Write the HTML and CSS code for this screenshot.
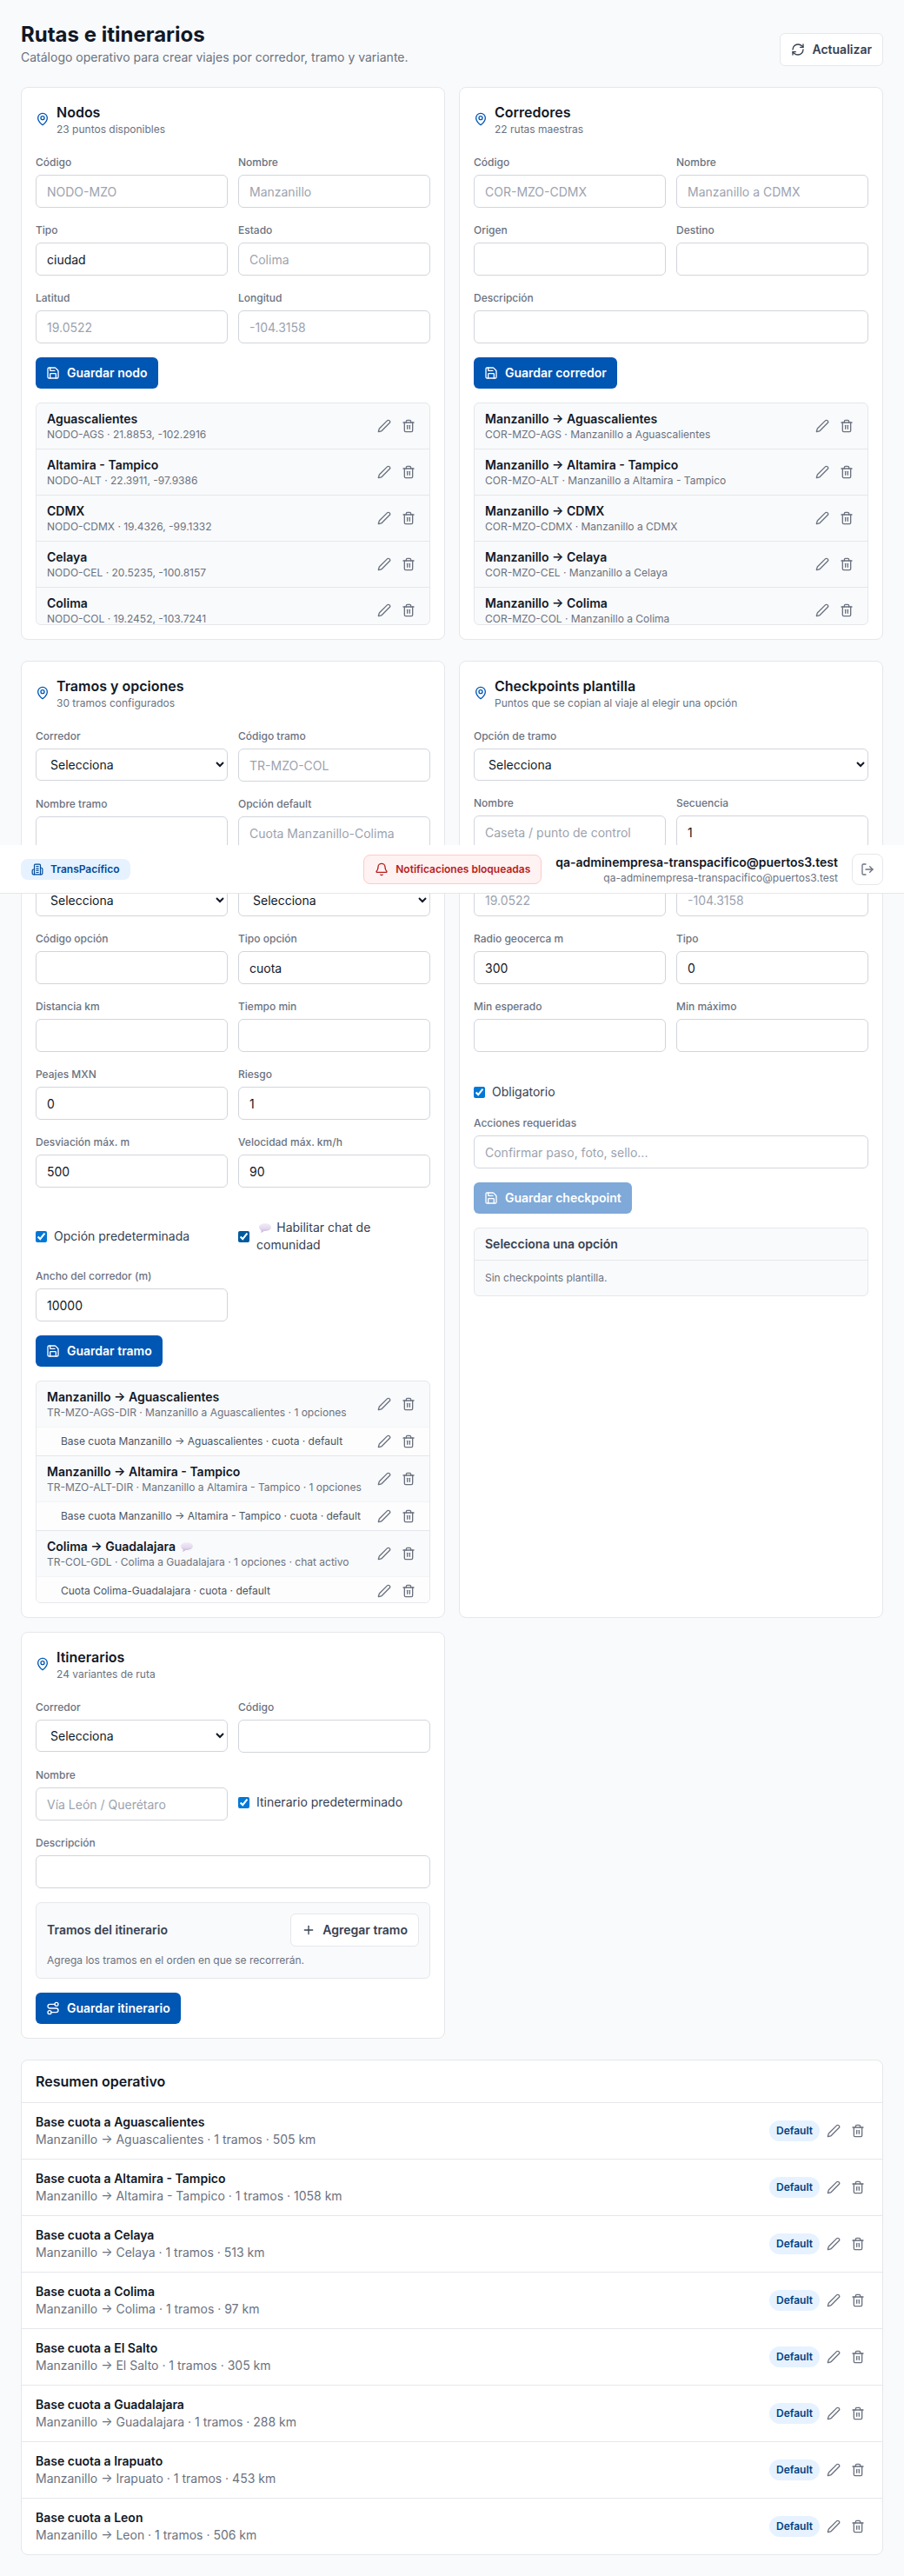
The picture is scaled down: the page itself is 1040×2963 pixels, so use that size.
FILE: index.html
```html
<!DOCTYPE html>
<html lang="es">
<head>
<meta charset="utf-8">
<title>Rutas e itinerarios</title>
<link rel="stylesheet" href="styles.css">
</head>
<body>
<svg class="sprite" aria-hidden="true">
  <defs>
    <linearGradient id="bubble-fill" x1="0" y1="0" x2="0" y2="1"><stop offset="0" stop-color="#f1eaf6"/><stop offset=".55" stop-color="#e4d9ee"/><stop offset="1" stop-color="#c3aedb"/></linearGradient>
  </defs>
  <symbol id="pin" viewBox="0 0 24 24"><path d="M20 10c0 4.993-5.539 10.193-7.399 11.799a1 1 0 0 1-1.202 0C9.539 20.193 4 14.993 4 10a8 8 0 0 1 16 0"/><circle cx="12" cy="10" r="3"/></symbol>
  <symbol id="refresh-cw" viewBox="0 0 24 24"><path d="M3 12a9 9 0 0 1 9-9 9.75 9.75 0 0 1 6.74 2.74L21 8"/><path d="M21 3v5h-5"/><path d="M21 12a9 9 0 0 1-9 9 9.75 9.75 0 0 1-6.74-2.74L3 16"/><path d="M8 16H3v5"/></symbol>
  <symbol id="save" viewBox="0 0 24 24"><path d="M15.2 3a2 2 0 0 1 1.4.6l3.8 3.8a2 2 0 0 1 .6 1.4V19a2 2 0 0 1-2 2H5a2 2 0 0 1-2-2V5a2 2 0 0 1 2-2z"/><path d="M17 21v-7a1 1 0 0 0-1-1H8a1 1 0 0 0-1 1v7"/><path d="M7 3v4a1 1 0 0 0 1 1h7"/></symbol>
  <symbol id="pencil" viewBox="0 0 24 24"><path d="M21.174 6.812a1 1 0 0 0-3.986-3.987L3.842 16.174a2 2 0 0 0-.5.83l-1.321 4.352a.5.5 0 0 0 .623.622l4.353-1.32a2 2 0 0 0 .83-.497z"/></symbol>
  <symbol id="trash" viewBox="0 0 24 24"><path d="M3 6h18"/><path d="M19 6v14a2 2 0 0 1-2 2H7a2 2 0 0 1-2-2V6"/><path d="M8 6V4a2 2 0 0 1 2-2h4a2 2 0 0 1 2 2v2"/><path d="M10 11v6"/><path d="M14 11v6"/></symbol>
  <symbol id="plus" viewBox="0 0 24 24"><path d="M5 12h14"/><path d="M12 5v14"/></symbol>
  <symbol id="route" viewBox="0 0 24 24"><circle cx="6" cy="19" r="3"/><path d="M9 19h8.5a3.5 3.5 0 0 0 0-7h-11a3.5 3.5 0 0 1 0-7H15"/><circle cx="18" cy="5" r="3"/></symbol>
  <symbol id="building" viewBox="0 0 24 24"><path d="M6 22V4a2 2 0 0 1 2-2h8a2 2 0 0 1 2 2v18Z"/><path d="M6 12H4a2 2 0 0 0-2 2v6a2 2 0 0 0 2 2h2"/><path d="M18 9h2a2 2 0 0 1 2 2v9a2 2 0 0 1-2 2h-2"/><path d="M10 6h4"/><path d="M10 10h4"/><path d="M10 14h4"/><path d="M10 18h4"/></symbol>
  <symbol id="bell" viewBox="0 0 24 24"><path d="M10.268 21a2 2 0 0 0 3.464 0"/><path d="M3.262 15.326A1 1 0 0 0 4 17h16a1 1 0 0 0 .74-1.673C19.41 13.956 18 12.499 18 8A6 6 0 0 0 6 8c0 4.499-1.411 5.956-2.738 7.326"/></symbol>
  <symbol id="logout" viewBox="0 0 24 24"><path d="M9 21H5a2 2 0 0 1-2-2V5a2 2 0 0 1 2-2h4"/><path d="m16 17 5-5-5-5"/><path d="M21 12H9"/></symbol>
  <symbol id="bubble" viewBox="0 0 14 11"><path fill="url(#bubble-fill)" d="M7 .2C10.900.2 13.900 2 13.900 4.600S10.900 9 7 9c-.6 0-1.200 0-1.700-.1C4.600 9.900 3.200 10.600 1.900 10.700c.6-.7.8-1.600.7-2.500C1 7.400.1 6.100.1 4.600.1 2 3.100.2 7 .2Z"/></symbol>
</svg>

<header class="topbar">
  <span class="company"><svg class="icon icon-sm"><use href="#building"/></svg>TransPacífico</span>
  <div class="topbar-right">
    <button class="alert"><svg class="icon"><use href="#bell"/></svg>Notificaciones bloqueadas</button>
    <div class="user">
      <div class="user-name">qa-adminempresa-transpacifico@puertos3.test</div>
      <div class="user-mail">qa-adminempresa-transpacifico@puertos3.test</div>
    </div>
    <button class="logout"><svg class="icon"><use href="#logout"/></svg></button>
  </div>
</header>

<main class="page">
  <div class="page-head">
    <div>
      <h1 class="page-title">Rutas e itinerarios</h1>
      <p class="page-sub">Catálogo operativo para crear viajes por corredor, tramo y variante.</p>
    </div>
    <button class="btn btn-outline"><svg class="icon"><use href="#refresh-cw"/></svg>Actualizar</button>
  </div>

  <div class="cards">
    <section class="card">
      <div class="card-head"><svg class="icon"><use href="#pin"/></svg><div><h2 class="card-title">Nodos</h2><p class="card-sub">23 puntos disponibles</p></div></div>
      <div class="fields">
        <label class="field"><span class="label">Código</span><input class="input" placeholder="NODO-MZO"></label>
        <label class="field"><span class="label">Nombre</span><input class="input" placeholder="Manzanillo"></label>
        <label class="field"><span class="label">Tipo</span><input class="input" value="ciudad"></label>
        <label class="field"><span class="label">Estado</span><input class="input" placeholder="Colima"></label>
        <label class="field"><span class="label">Latitud</span><input class="input" placeholder="19.0522"></label>
        <label class="field"><span class="label">Longitud</span><input class="input" placeholder="-104.3158"></label>
      </div>
      <button class="btn btn-primary"><svg class="icon"><use href="#save"/></svg>Guardar nodo</button>
      <div class="list">
        <div class="row"><div class="row-text"><div class="row-name">Aguascalientes</div><div class="row-sub">NODO-AGS · 21.8853, -102.2916</div></div><div class="actions"><button class="act"><svg class="icon"><use href="#pencil"/></svg></button><button class="act"><svg class="icon"><use href="#trash"/></svg></button></div></div>
        <div class="row"><div class="row-text"><div class="row-name">Altamira - Tampico</div><div class="row-sub">NODO-ALT · 22.3911, -97.9386</div></div><div class="actions"><button class="act"><svg class="icon"><use href="#pencil"/></svg></button><button class="act"><svg class="icon"><use href="#trash"/></svg></button></div></div>
        <div class="row"><div class="row-text"><div class="row-name">CDMX</div><div class="row-sub">NODO-CDMX · 19.4326, -99.1332</div></div><div class="actions"><button class="act"><svg class="icon"><use href="#pencil"/></svg></button><button class="act"><svg class="icon"><use href="#trash"/></svg></button></div></div>
        <div class="row"><div class="row-text"><div class="row-name">Celaya</div><div class="row-sub">NODO-CEL · 20.5235, -100.8157</div></div><div class="actions"><button class="act"><svg class="icon"><use href="#pencil"/></svg></button><button class="act"><svg class="icon"><use href="#trash"/></svg></button></div></div>
        <div class="row"><div class="row-text"><div class="row-name">Colima</div><div class="row-sub">NODO-COL · 19.2452, -103.7241</div></div><div class="actions"><button class="act"><svg class="icon"><use href="#pencil"/></svg></button><button class="act"><svg class="icon"><use href="#trash"/></svg></button></div></div>
      </div>
    </section>

    <section class="card">
      <div class="card-head"><svg class="icon"><use href="#pin"/></svg><div><h2 class="card-title">Corredores</h2><p class="card-sub">22 rutas maestras</p></div></div>
      <div class="fields">
        <label class="field"><span class="label">Código</span><input class="input" placeholder="COR-MZO-CDMX"></label>
        <label class="field"><span class="label">Nombre</span><input class="input" placeholder="Manzanillo a CDMX"></label>
        <label class="field"><span class="label">Origen</span><input class="input"></label>
        <label class="field"><span class="label">Destino</span><input class="input"></label>
        <label class="field wide"><span class="label">Descripción</span><input class="input"></label>
      </div>
      <button class="btn btn-primary"><svg class="icon"><use href="#save"/></svg>Guardar corredor</button>
      <div class="list">
        <div class="row"><div class="row-text"><div class="row-name">Manzanillo → Aguascalientes</div><div class="row-sub">COR-MZO-AGS · Manzanillo a Aguascalientes</div></div><div class="actions"><button class="act"><svg class="icon"><use href="#pencil"/></svg></button><button class="act"><svg class="icon"><use href="#trash"/></svg></button></div></div>
        <div class="row"><div class="row-text"><div class="row-name">Manzanillo → Altamira - Tampico</div><div class="row-sub">COR-MZO-ALT · Manzanillo a Altamira - Tampico</div></div><div class="actions"><button class="act"><svg class="icon"><use href="#pencil"/></svg></button><button class="act"><svg class="icon"><use href="#trash"/></svg></button></div></div>
        <div class="row"><div class="row-text"><div class="row-name">Manzanillo → CDMX</div><div class="row-sub">COR-MZO-CDMX · Manzanillo a CDMX</div></div><div class="actions"><button class="act"><svg class="icon"><use href="#pencil"/></svg></button><button class="act"><svg class="icon"><use href="#trash"/></svg></button></div></div>
        <div class="row"><div class="row-text"><div class="row-name">Manzanillo → Celaya</div><div class="row-sub">COR-MZO-CEL · Manzanillo a Celaya</div></div><div class="actions"><button class="act"><svg class="icon"><use href="#pencil"/></svg></button><button class="act"><svg class="icon"><use href="#trash"/></svg></button></div></div>
        <div class="row"><div class="row-text"><div class="row-name">Manzanillo → Colima</div><div class="row-sub">COR-MZO-COL · Manzanillo a Colima</div></div><div class="actions"><button class="act"><svg class="icon"><use href="#pencil"/></svg></button><button class="act"><svg class="icon"><use href="#trash"/></svg></button></div></div>
      </div>
    </section>
  </div>

  <div class="cards">
    <section class="card">
      <div class="card-head"><svg class="icon"><use href="#pin"/></svg><div><h2 class="card-title">Tramos y opciones</h2><p class="card-sub">30 tramos configurados</p></div></div>
      <div class="fields">
        <label class="field"><span class="label">Corredor</span><select class="input select"><option>Selecciona</option></select></label>
        <label class="field"><span class="label">Código tramo</span><input class="input" placeholder="TR-MZO-COL"></label>
        <label class="field"><span class="label">Nombre tramo</span><input class="input"></label>
        <label class="field"><span class="label">Opción default</span><input class="input" placeholder="Cuota Manzanillo-Colima"></label>
        <label class="field"><span class="label label-covered"></span><select class="input select"><option>Selecciona</option></select></label>
        <label class="field"><span class="label label-covered"></span><select class="input select"><option>Selecciona</option></select></label>
        <label class="field"><span class="label">Código opción</span><input class="input"></label>
        <label class="field"><span class="label">Tipo opción</span><input class="input" value="cuota"></label>
        <label class="field"><span class="label">Distancia km</span><input class="input"></label>
        <label class="field"><span class="label">Tiempo min</span><input class="input"></label>
        <label class="field"><span class="label">Peajes MXN</span><input class="input" value="0"></label>
        <label class="field"><span class="label">Riesgo</span><input class="input" value="1"></label>
        <label class="field"><span class="label">Desviación máx. m</span><input class="input" value="500"></label>
        <label class="field"><span class="label">Velocidad máx. km/h</span><input class="input" value="90"></label>
        <label class="check"><input class="box" type="checkbox" checked><span>Opción predeterminada</span></label>
        <label class="check"><input class="box box-dark" type="checkbox" checked><span><svg class="bubble"><use href="#bubble"/></svg> Habilitar chat de comunidad</span></label>
        <label class="field"><span class="label">Ancho del corredor (m)</span><input class="input" value="10000"></label>
      </div>
      <button class="btn btn-primary"><svg class="icon"><use href="#save"/></svg>Guardar tramo</button>
      <div class="list">
        <div class="group">
          <div class="row"><div class="row-text"><div class="row-name">Manzanillo → Aguascalientes</div><div class="row-sub">TR-MZO-AGS-DIR · Manzanillo a Aguascalientes · 1 opciones</div></div><div class="actions"><button class="act"><svg class="icon"><use href="#pencil"/></svg></button><button class="act"><svg class="icon"><use href="#trash"/></svg></button></div></div>
          <div class="option"><span>Base cuota Manzanillo → Aguascalientes · cuota · default</span><div class="actions"><button class="act"><svg class="icon"><use href="#pencil"/></svg></button><button class="act"><svg class="icon"><use href="#trash"/></svg></button></div></div>
        </div>
        <div class="group">
          <div class="row"><div class="row-text"><div class="row-name">Manzanillo → Altamira - Tampico</div><div class="row-sub">TR-MZO-ALT-DIR · Manzanillo a Altamira - Tampico · 1 opciones</div></div><div class="actions"><button class="act"><svg class="icon"><use href="#pencil"/></svg></button><button class="act"><svg class="icon"><use href="#trash"/></svg></button></div></div>
          <div class="option"><span>Base cuota Manzanillo → Altamira - Tampico · cuota · default</span><div class="actions"><button class="act"><svg class="icon"><use href="#pencil"/></svg></button><button class="act"><svg class="icon"><use href="#trash"/></svg></button></div></div>
        </div>
        <div class="group">
          <div class="row"><div class="row-text"><div class="row-name">Colima → Guadalajara <svg class="bubble"><use href="#bubble"/></svg></div><div class="row-sub">TR-COL-GDL · Colima a Guadalajara · 1 opciones · chat activo</div></div><div class="actions"><button class="act"><svg class="icon"><use href="#pencil"/></svg></button><button class="act"><svg class="icon"><use href="#trash"/></svg></button></div></div>
          <div class="option"><span>Cuota Colima-Guadalajara · cuota · default</span><div class="actions"><button class="act"><svg class="icon"><use href="#pencil"/></svg></button><button class="act"><svg class="icon"><use href="#trash"/></svg></button></div></div>
        </div>
      </div>
    </section>

    <section class="card">
      <div class="card-head"><svg class="icon"><use href="#pin"/></svg><div><h2 class="card-title">Checkpoints plantilla</h2><p class="card-sub">Puntos que se copian al viaje al elegir una opción</p></div></div>
      <div class="fields">
        <label class="field wide"><span class="label">Opción de tramo</span><select class="input select"><option>Selecciona</option></select></label>
        <label class="field"><span class="label">Nombre</span><input class="input" placeholder="Caseta / punto de control"></label>
        <label class="field"><span class="label">Secuencia</span><input class="input" value="1"></label>
        <label class="field"><span class="label label-covered"></span><input class="input" placeholder="19.0522"></label>
        <label class="field"><span class="label label-covered"></span><input class="input" placeholder="-104.3158"></label>
        <label class="field"><span class="label">Radio geocerca m</span><input class="input" value="300"></label>
        <label class="field"><span class="label">Tipo</span><input class="input" value="0"></label>
        <label class="field"><span class="label">Min esperado</span><input class="input"></label>
        <label class="field"><span class="label">Min máximo</span><input class="input"></label>
        <label class="check wide"><input class="box" type="checkbox" checked><span>Obligatorio</span></label>
        <label class="field wide"><span class="label">Acciones requeridas</span><input class="input" placeholder="Confirmar paso, foto, sello..."></label>
      </div>
      <button class="btn btn-primary" disabled><svg class="icon"><use href="#save"/></svg>Guardar checkpoint</button>
      <div class="panel">
        <div class="panel-head">Selecciona una opción</div>
        <p class="panel-empty">Sin checkpoints plantilla.</p>
      </div>
    </section>

    <section class="card">
      <div class="card-head"><svg class="icon"><use href="#pin"/></svg><div><h2 class="card-title">Itinerarios</h2><p class="card-sub">24 variantes de ruta</p></div></div>
      <div class="fields">
        <label class="field"><span class="label">Corredor</span><select class="input select"><option>Selecciona</option></select></label>
        <label class="field"><span class="label">Código</span><input class="input"></label>
        <label class="field"><span class="label">Nombre</span><input class="input" placeholder="Vía León / Querétaro"></label>
        <label class="check"><input class="box" type="checkbox" checked><span>Itinerario predeterminado</span></label>
        <label class="field wide"><span class="label">Descripción</span><input class="input"></label>
      </div>
      <div class="panel stops">
        <div class="stops-head"><span>Tramos del itinerario</span><button class="btn btn-outline"><svg class="icon"><use href="#plus"/></svg>Agregar tramo</button></div>
        <p class="stops-hint">Agrega los tramos en el orden en que se recorrerán.</p>
      </div>
      <button class="btn btn-primary"><svg class="icon"><use href="#route"/></svg>Guardar itinerario</button>
    </section>
  </div>

  <section class="summary">
    <h2 class="summary-title">Resumen operativo</h2>
    <div class="sum-row"><div><div class="row-name">Base cuota a Aguascalientes</div><div class="sum-sub">Manzanillo → Aguascalientes · 1 tramos · 505 km</div></div><div class="actions"><span class="badge">Default</span><button class="act"><svg class="icon"><use href="#pencil"/></svg></button><button class="act"><svg class="icon"><use href="#trash"/></svg></button></div></div>
    <div class="sum-row"><div><div class="row-name">Base cuota a Altamira - Tampico</div><div class="sum-sub">Manzanillo → Altamira - Tampico · 1 tramos · 1058 km</div></div><div class="actions"><span class="badge">Default</span><button class="act"><svg class="icon"><use href="#pencil"/></svg></button><button class="act"><svg class="icon"><use href="#trash"/></svg></button></div></div>
    <div class="sum-row"><div><div class="row-name">Base cuota a Celaya</div><div class="sum-sub">Manzanillo → Celaya · 1 tramos · 513 km</div></div><div class="actions"><span class="badge">Default</span><button class="act"><svg class="icon"><use href="#pencil"/></svg></button><button class="act"><svg class="icon"><use href="#trash"/></svg></button></div></div>
    <div class="sum-row"><div><div class="row-name">Base cuota a Colima</div><div class="sum-sub">Manzanillo → Colima · 1 tramos · 97 km</div></div><div class="actions"><span class="badge">Default</span><button class="act"><svg class="icon"><use href="#pencil"/></svg></button><button class="act"><svg class="icon"><use href="#trash"/></svg></button></div></div>
    <div class="sum-row"><div><div class="row-name">Base cuota a El Salto</div><div class="sum-sub">Manzanillo → El Salto · 1 tramos · 305 km</div></div><div class="actions"><span class="badge">Default</span><button class="act"><svg class="icon"><use href="#pencil"/></svg></button><button class="act"><svg class="icon"><use href="#trash"/></svg></button></div></div>
    <div class="sum-row"><div><div class="row-name">Base cuota a Guadalajara</div><div class="sum-sub">Manzanillo → Guadalajara · 1 tramos · 288 km</div></div><div class="actions"><span class="badge">Default</span><button class="act"><svg class="icon"><use href="#pencil"/></svg></button><button class="act"><svg class="icon"><use href="#trash"/></svg></button></div></div>
    <div class="sum-row"><div><div class="row-name">Base cuota a Irapuato</div><div class="sum-sub">Manzanillo → Irapuato · 1 tramos · 453 km</div></div><div class="actions"><span class="badge">Default</span><button class="act"><svg class="icon"><use href="#pencil"/></svg></button><button class="act"><svg class="icon"><use href="#trash"/></svg></button></div></div>
    <div class="sum-row"><div><div class="row-name">Base cuota a Leon</div><div class="sum-sub">Manzanillo → Leon · 1 tramos · 506 km</div></div><div class="actions"><span class="badge">Default</span><button class="act"><svg class="icon"><use href="#pencil"/></svg></button><button class="act"><svg class="icon"><use href="#trash"/></svg></button></div></div>
  </section>
</main>
</body>
</html>
```
FILE: styles.css
```css
*, *::before, *::after { box-sizing: border-box; }
body, h1, h2, p { margin: 0; }
body {
  position: relative;
  background: #f9fafb;
  color: #111827;
  font: 400 14px/20px Inter, "Liberation Sans", sans-serif;
}
button, input, select { font: inherit; color: inherit; margin: 0; }
button { border: 0; background: none; padding: 0; }
.sprite { position: absolute; width: 0; height: 0; }
.icon {
  width: 16px; height: 16px; flex: none; display: block;
  fill: none; stroke: currentColor; stroke-width: 2;
  stroke-linecap: round; stroke-linejoin: round;
}
.icon-sm { width: 14px; height: 14px; }
.bubble { width: 14px; height: 11px; margin: 0 2.5px 0 2.8px; vertical-align: -1px; }

/* App bar floats over the page content */
.topbar {
  position: absolute; top: 972px; left: 0; right: 0; z-index: 10;
  height: 56px; padding: 0 24px;
  display: flex; align-items: center; justify-content: space-between;
  background: #fff; border-bottom: 1px solid #e5e7eb;
}
.topbar-right { display: flex; align-items: center; gap: 16px; }
.company {
  display: flex; align-items: center; gap: 8px;
  padding: 4px 12px; border-radius: 8px;
  background: #e6f2ff; color: #004a99;
  font-size: 12px; line-height: 16px; font-weight: 600;
}
.alert {
  display: flex; align-items: center; gap: 8px;
  height: 34px; padding: 0 12px; border-radius: 8px;
  border: 1px solid #fecaca; background: #fef2f2; color: #b91c1c;
  font-size: 12px; line-height: 16px; font-weight: 600;
}
.user { text-align: right; }
.user-name { font-weight: 600; }
.user-mail { font-size: 12px; line-height: 16px; color: #6b7280; }
.logout {
  display: flex; align-items: center; justify-content: center;
  width: 36px; height: 36px; border: 1px solid #e5e7eb; border-radius: 8px; color: #6b7280;
}

.page { padding: 24px; display: flex; flex-direction: column; gap: 24px; }
.page-head { display: flex; align-items: flex-end; justify-content: space-between; }
.page-title { font-size: 24px; line-height: 32px; font-weight: 700; }
.page-sub { color: #6b7280; }

.btn {
  display: inline-flex; align-items: center; gap: 8px;
  padding: 8px 12px; border-radius: 6px; font-weight: 600;
}
.btn-outline { border: 1px solid #e5e7eb; background: #fff; color: #374151; }
.btn-primary { background: #0056b3; color: #fff; align-self: flex-start; }
.btn-primary:disabled { opacity: .5; }

.cards { display: grid; grid-template-columns: 1fr 1fr; gap: 16px; }
.card {
  display: flex; flex-direction: column; gap: 16px;
  padding: 16px; background: #fff; border: 1px solid #e5e7eb; border-radius: 8px;
}
.card-head { display: flex; align-items: center; gap: 8px; }
.card-head > .icon { color: #0056b3; }
.card-title { font-size: 16px; line-height: 24px; font-weight: 600; }
.card-sub { font-size: 12px; line-height: 16px; color: #6b7280; }

.fields { display: grid; grid-template-columns: 1fr 1fr; gap: 18px 12px; padding-top: 6px; }
.wide { grid-column: 1 / -1; }
.field { display: flex; flex-direction: column; gap: 6px; min-width: 0; }
.label { font-size: 12px; line-height: 16px; font-weight: 500; color: #6b7280; }
.label-covered { height: 16px; }
.input {
  width: 100%; height: 38px; padding: 8px 12px;
  border: 1px solid #d1d5db; border-radius: 6px; background: #fff; outline: none;
}
.input::placeholder { color: #9ca3af; opacity: 1; }
.select { height: 37px; }
.check { display: flex; align-items: center; gap: 8px; padding-top: 18px; color: #374151; }
.box { width: 13px; height: 13px; flex: none; accent-color: #0078d7; }
.box-dark { accent-color: #005a9e; }

.list {
  height: 256px; overflow: hidden;
  border: 1px solid #e5e7eb; border-radius: 6px; background: #f9fafb;
}
.row {
  display: flex; align-items: center; justify-content: space-between;
  padding: 8px 12px; border-bottom: 1px solid #e5e7eb;
}
.row-text { min-width: 0; white-space: nowrap; }
.row-name { font-weight: 600; }
.row-sub { font-size: 12px; line-height: 16px; color: #6b7280; }
.actions { display: flex; align-items: center; gap: 4px; flex: none; }
.act { padding: 4px; color: #6b7280; }
.group { border-bottom: 1px solid #e5e7eb; }
.group .row { border-bottom-color: #f3f4f6; }
.option {
  display: flex; align-items: center; justify-content: space-between;
  padding: 4px 12px 4px 28px; background: #fdfdfd;
  font-size: 12px; line-height: 16px; color: #4b5563; white-space: nowrap;
}

.panel { border: 1px solid #e5e7eb; border-radius: 6px; background: #f9fafb; }
.panel-head { padding: 8px 12px; border-bottom: 1px solid #e5e7eb; font-weight: 600; color: #374151; }
.panel-empty { padding: 12px; font-size: 12px; line-height: 16px; color: #6b7280; }
.stops { padding: 12px; }
.stops-head { display: flex; align-items: center; justify-content: space-between; font-weight: 600; color: #374151; }
.stops-hint { margin-top: 8px; font-size: 12px; line-height: 16px; color: #6b7280; }

.summary { background: #fff; border: 1px solid #e5e7eb; border-radius: 8px; }
.summary-title {
  padding: 12px 16px; border-bottom: 1px solid #e5e7eb;
  font-size: 16px; line-height: 24px; font-weight: 600;
}
.sum-row {
  display: flex; align-items: center; justify-content: space-between;
  padding: 12px 16px; border-bottom: 1px solid #e5e7eb;
}
.sum-row:last-child { border-bottom: 0; }
.sum-sub { color: #6b7280; }
.badge {
  padding: 4px 8px; border-radius: 12px; background: #e6f2ff; color: #004080;
  font-size: 12px; line-height: 16px; font-weight: 600;
}
```
